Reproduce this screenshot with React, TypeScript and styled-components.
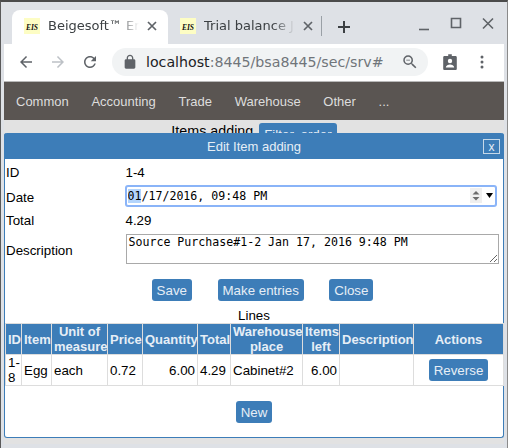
import React from "react";
import styled, { createGlobalStyle } from "styled-components";

const GlobalStyle = createGlobalStyle`
  html, body {
    margin: 0;
    padding: 0;
    background: #dee1e6;
  }
  body {
    font-family: "Liberation Sans", Arial, sans-serif;
  }
`;

const blue = "#3d7db8";

const Frame = styled.div`
  position: relative;
  box-sizing: border-box;
  width: 508px;
  height: 448px;
  overflow: hidden;
  background: #dee1e6;
  border-top: 2px solid #4b4b4b;
  border-left: 1px solid #5a5a5a;
  border-right: 1px solid #8a8a8a;
  padding: 0 3px 4px 3px;
  display: flex;
  flex-direction: column;
`;

const TabStrip = styled.div`
  height: 42px;
  box-sizing: border-box;
  padding: 8px 0 0 8px;
  display: flex;
  align-items: stretch;
  flex: none;
`;

const Tab = styled.div<{ $active?: boolean }>`
  width: ${(p) => (p.$active ? 156 : 153)}px;
  box-sizing: border-box;
  padding: 0 0 3px 12px;
  display: flex;
  align-items: center;
  border-radius: 8px 8px 0 0;
  background: ${(p) => (p.$active ? "#fff" : "transparent")};
  color: #3c4043;
  font-family: "DejaVu Sans", sans-serif;
  font-size: 13px;
`;

const Favicon = styled.span`
  width: 16px;
  height: 16px;
  flex: none;
  margin-right: 8px;
  background: #fdfdc4;
  color: #111;
  font-family: "Liberation Serif", serif;
  font-size: 7.5px;
  font-style: italic;
  font-weight: bold;
  line-height: 20px;
  text-align: center;
  overflow: hidden;
`;

const TabTitle = styled.span<{ $width: number }>`
  width: ${(p) => p.$width}px;
  flex: none;
  overflow: hidden;
  white-space: nowrap;
  -webkit-mask-image: linear-gradient(90deg, #000 75%, transparent);
  mask-image: linear-gradient(90deg, #000 75%, transparent);
`;

const TabClose = styled.svg`
  width: 16px;
  height: 16px;
  margin-left: 5px;
  flex: none;
`;

const TabDivider = styled.span`
  width: 1px;
  height: 20px;
  margin: 6px 0 0 0;
  background: #9aa0a6;
  flex: none;
`;

const NewTab = styled.svg`
  width: 16px;
  height: 16px;
  margin: 9px 0 0 14px;
  flex: none;
`;

const WindowControls = styled.div`
  margin-left: auto;
  padding: 0 8px 0 0;
  display: flex;
  gap: 16px;
  height: 16px;
  margin-top: 6px;
`;

const Toolbar = styled.div`
  height: 38px;
  flex: none;
  box-sizing: border-box;
  background: #fff;
  border-bottom: 1px solid #b9b9b9;
  display: flex;
  align-items: center;
  padding: 0 0 1px 13px;
`;

const ToolIcon = styled.svg<{ $gap?: number }>`
  width: 18px;
  height: 18px;
  flex: none;
  margin-right: ${(p) => p.$gap ?? 14}px;
`;

const Omnibox = styled.div`
  width: 316px;
  height: 28px;
  flex: none;
  box-sizing: border-box;
  margin: 0 13px 0 0;
  background: #f1f3f4;
  border-radius: 14px;
  display: flex;
  align-items: center;
  padding: 0 9px 0 10px;
  font-family: "DejaVu Sans", sans-serif;
  font-size: 14.2px;
  color: #70757a;
`;

const Host = styled.span`
  color: #202124;
`;

const Url = styled.span`
  flex: 1;
  margin-left: 8px;
  white-space: nowrap;
`;

const NavBar = styled.nav`
  height: 38px;
  flex: none;
  background: #5a5552;
  display: flex;
  align-items: center;
  padding-left: 12px;
  gap: 22.7px;
  color: #ddd;
  font-size: 13px;
`;

const Main = styled.main`
  flex: 1;
  background: #e2e2e2;
  display: flex;
  justify-content: center;
  align-items: flex-start;
  gap: 6px;
  padding-top: 3px;
  font-size: 14.3px;
  color: #000;
`;

const Button = styled.button`
  height: 22px;
  padding: 0 5px;
  border: 0;
  border-radius: 3px;
  background: ${blue};
  color: #e6eef6;
  font-family: "Liberation Sans", Arial, sans-serif;
  font-size: 13.33px;
  vertical-align: middle;
  cursor: pointer;
`;

const Dialog = styled.section`
  position: absolute;
  left: 3px;
  top: 131px;
  width: 500px;
  height: 305px;
  box-sizing: border-box;
  background: #fff;
  border: 1px solid ${blue};
  border-top: 0;
  border-radius: 3px;
  font-size: 13.33px;
  color: #000;
`;

const DialogHeader = styled.header`
  position: relative;
  height: 26px;
  margin: 0 -1px;
  background: ${blue};
  border-radius: 3px 3px 0 0;
  display: flex;
  align-items: center;
  justify-content: center;
  color: #e6eef6;
  font-size: 13px;
`;

const DialogClose = styled.span`
  position: absolute;
  right: 4px;
  top: 6px;
  width: 15px;
  height: 13px;
  border: 1px solid #c6d8e8;
  text-align: center;
  line-height: 14px;
  font-size: 12px;
`;

const Form = styled.div`
  display: grid;
  grid-template-columns: 119.5px 1fr;
  padding: 1px 4px 0 1px;
  align-items: center;
`;

const FieldLabel = styled.label<{ $shift?: number }>`
  position: relative;
  top: ${(p) => p.$shift ?? 0}px;
`;

const Value = styled.div`
  height: 24px;
  line-height: 26px;
`;

const DateField = styled.div`
  position: relative;
  height: 24px;
  display: flex;
  align-items: center;
`;

const DateInput = styled.input`
  box-sizing: border-box;
  width: calc(100% - 3px);
  height: 20px;
  margin: 0;
  padding: 0 1px;
  border: 1px solid #8ab4f8;
  border-radius: 2px;
  box-shadow: 0 0 0 1px #8ab4f8;
  font-family: "DejaVu Sans Mono", monospace;
  font-size: 11.6px;
  outline: none;

  &::-webkit-calendar-picker-indicator {
    display: none;
  }

  &::-webkit-datetime-edit-fields-wrapper,
  &::-webkit-datetime-edit,
  &::-webkit-datetime-edit-day-field,
  &::-webkit-datetime-edit-year-field,
  &::-webkit-datetime-edit-hour-field,
  &::-webkit-datetime-edit-minute-field,
  &::-webkit-datetime-edit-ampm-field {
    padding: 0;
  }

  /* the month segment stays selected, as in the picture */
  &::-webkit-datetime-edit-month-field {
    padding: 0;
    background-color: #b3d4fc;
    color: #000;
  }
`;

const DateControls = styled.svg`
  position: absolute;
  right: 4px;
  top: 3px;
  width: 28px;
  height: 18px;
`;

const DescriptionInput = styled.textarea`
  box-sizing: border-box;
  width: 100%;
  height: 30px;
  margin: 2px 0 0;
  padding: 1px 2px;
  display: block;
  border: 1px solid #a9a9a9;
  font-family: "DejaVu Sans Mono", monospace;
  font-size: 11.6px;
  line-height: 13px;
`;

const Actions = styled.div`
  display: flex;
  justify-content: center;
  gap: 25.5px;
  padding: 15px 0 0 17px;
`;

const LinesTitle = styled.div`
  margin-top: 7px;
  height: 15px;
  line-height: 15px;
  text-align: center;
`;

const LinesTable = styled.table`
  width: 498px;
  table-layout: fixed;
  border-collapse: collapse;
  margin: 0;
`;

const HeadCell = styled.th`
  height: 30px;
  padding: 0 2px;
  box-sizing: border-box;
  background: ${blue};
  border: 1px solid #ddd;
  color: #e6eef6;
  font-size: 13px;
  line-height: 15px;
  text-align: center;
  white-space: nowrap;
`;

const Cell = styled.td<{ $right?: boolean }>`
  height: 31px;
  padding: 0 2px;
  box-sizing: border-box;
  border: 1px solid #ddd;
  font-size: 13.33px;
  line-height: 15px;
  text-align: ${(p) => (p.$right ? "right" : "left")};
`;

const ActionCell = styled(Cell)`
  text-align: center;
`;

const Footer = styled.div`
  display: flex;
  justify-content: center;
  padding-top: 15px;
`;

const columns = [
  { title: "ID", width: 16 },
  { title: "Item", width: 30 },
  { title: "Unit of\nmeasure", width: 56 },
  { title: "Price", width: 35 },
  { title: "Quantity", width: 55 },
  { title: "Total", width: 33 },
  { title: "Warehouse\nplace", width: 72 },
  { title: "Items\nleft", width: 37 },
  { title: "Description", width: 74 },
  { title: "Actions", width: 90 },
];

const Column = styled.col<{ $width: number }>`
  width: ${(p) => p.$width}px;
`;

const HeadLine = styled.span`
  display: block;
`;

const CloseGlyph = () => (
  <TabClose viewBox="0 0 16 16">
    <path d="M4 4l8 8M12 4l-8 8" stroke="#5f6368" strokeWidth="1.7" fill="none" />
  </TabClose>
);

const App: React.FC = () => {
  return (
    <Frame>
      <GlobalStyle />
      <TabStrip>
        <Tab $active>
          <Favicon>EIS</Favicon>
          <TabTitle $width={91}>Beigesoft™ En</TabTitle>
          <CloseGlyph />
        </Tab>
        <Tab>
          <Favicon>EIS</Favicon>
          <TabTitle $width={91}>Trial balance J</TabTitle>
          <CloseGlyph />
        </Tab>
        <TabDivider />
        <NewTab viewBox="0 0 16 16">
          <path d="M8 2v12M2 8h12" stroke="#3c4043" strokeWidth="2" fill="none" />
        </NewTab>
        <WindowControls>
          <svg width="16" height="16" viewBox="0 0 16 16">
            <path d="M3 13.500h10" stroke="#5f6368" strokeWidth="1.6" fill="none" />
          </svg>
          <svg width="16" height="16" viewBox="0 0 16 16">
            <path d="M3.500 2.500h9v9h-9z" stroke="#5f6368" strokeWidth="1.6" fill="none" />
          </svg>
          <svg width="16" height="16" viewBox="0 0 16 16">
            <path d="M3 2.500l10 10M13 2.500l-10 10" stroke="#5f6368" strokeWidth="1.6" fill="none" />
          </svg>
        </WindowControls>
      </TabStrip>

      <Toolbar>
        <ToolIcon viewBox="0 0 24 24">
          <path fill="#5f6368" d="M20 11H7.830l5.590-5.590L12 4l-8 8 8 8 1.410-1.410L7.830 13H20v-2z" />
        </ToolIcon>
        <ToolIcon viewBox="0 0 24 24">
          <path fill="#bdc1c6" d="M4 11h12.170l-5.590-5.590L12 4l8 8-8 8-1.410-1.410L16.170 13H4v-2z" />
        </ToolIcon>
        <ToolIcon viewBox="0 0 24 24" $gap={13}>
          <path
            fill="#5f6368"
            d="M17.65 6.350C16.200 4.900 14.210 4 12 4c-4.420 0-7.990 3.580-7.990 8s3.570 8 7.990 8c3.730 0 6.840-2.550 7.730-6h-2.080c-.820 2.330-3.040 4-5.650 4-3.310 0-6-2.690-6-6s2.690-6 6-6c1.660 0 3.140.690 4.220 1.780L13 11h7V4l-2.350 2.350z"
          />
        </ToolIcon>
        <Omnibox>
          <svg width="16" height="16" viewBox="0 0 24 24">
            <path
              fill="#5f6368"
              d="M18 8h-1V6c0-2.760-2.240-5-5-5S7 3.240 7 6v2H6c-1.100 0-2 .900-2 2v10c0 1.100.900 2 2 2h12c1.100 0 2-.900 2-2V10c0-1.100-.900-2-2-2zM9 6c0-1.660 1.340-3 3-3s3 1.340 3 3v2H9V6z"
            />
          </svg>
          <Url>
            <Host>localhost</Host>:8445/bsa8445/sec/srv#
          </Url>
          <svg width="18" height="18" viewBox="0 0 24 24">
            <path
              fill="#5f6368"
              d="M15.500 14h-.790l-.280-.270A6.471 6.471 0 0 0 16 9.500 6.500 6.500 0 1 0 9.500 16c1.610 0 3.090-.590 4.230-1.570l.270.280v.790l5 4.990L20.490 19l-4.990-5zm-6 0C7.010 14 5 11.990 5 9.500S7.010 5 9.500 5 14 7.010 14 9.500 11.990 14 9.500 14zM7 9h5v1H7z"
            />
          </svg>
        </Omnibox>
        <ToolIcon viewBox="0 0 18 18" $gap={15}>
          <path
            fill="#5f6368"
            d="M3.500 3h3.700V1.200h3.600V3h3.700c.800 0 1.300.600 1.300 1.300v11.400c0 .700-.500 1.300-1.300 1.300h-11c-.800 0-1.300-.600-1.300-1.300V4.300C2.200 3.600 2.700 3 3.500 3z"
          />
          <circle cx="9" cy="8" r="2.200" fill="#fff" />
          <path fill="#fff" d="M4.800 14.500c0-1.900 2.500-3 4.200-3s4.200 1.100 4.200 3z" />
        </ToolIcon>
        <svg width="16" height="16" viewBox="0 0 16 16">
          <circle cx="8" cy="3" r="1.500" fill="#5f6368" />
          <circle cx="8" cy="8" r="1.500" fill="#5f6368" />
          <circle cx="8" cy="13" r="1.500" fill="#5f6368" />
        </svg>
      </Toolbar>

      <NavBar>
        <span>Common</span>
        <span>Accounting</span>
        <span>Trade</span>
        <span>Warehouse</span>
        <span>Other</span>
        <span>...</span>
      </NavBar>

      <Main>
        <span>Items adding</span>
        <Button>Filter, order</Button>
      </Main>

      <Dialog>
        <DialogHeader>
          Edit Item adding
          <DialogClose>x</DialogClose>
        </DialogHeader>
        <Form>
          <FieldLabel>ID</FieldLabel>
          <Value>1-4</Value>
          <FieldLabel $shift={1}>Date</FieldLabel>
          <DateField>
            <DateInput type="datetime-local" defaultValue="2016-01-17T21:48" />
            <DateControls viewBox="0 0 28 18">
              <rect x="3" y="1" width="12" height="15" fill="#efefef" />
              <path d="M9 4l3.500 3.500h-7z" fill="#6b6b6b" />
              <path d="M9 13.500l3.500-3.500h-7z" fill="#6b6b6b" />
              <path d="M19 6h7l-3.500 5z" fill="#000" />
            </DateControls>
          </DateField>
          <FieldLabel>Total</FieldLabel>
          <Value>4.29</Value>
          <FieldLabel $shift={2}>Description</FieldLabel>
          <DescriptionInput defaultValue="Source Purchase#1-2 Jan 17, 2016 9:48 PM" />
        </Form>
        <Actions>
          <Button>Save</Button>
          <Button>Make entries</Button>
          <Button>Close</Button>
        </Actions>
        <LinesTitle>Lines</LinesTitle>
        <LinesTable>
          <colgroup>
            {columns.map((column) => (
              <Column key={column.title} $width={column.width} />
            ))}
          </colgroup>
          <thead>
            <tr>
              {columns.map((column) => (
                <HeadCell key={column.title}>
                  {column.title.split("\n").map((line) => (
                    <HeadLine key={line}>{line}</HeadLine>
                  ))}
                </HeadCell>
              ))}
            </tr>
          </thead>
          <tbody>
            <tr>
              <Cell>1-8</Cell>
              <Cell>Egg</Cell>
              <Cell>each</Cell>
              <Cell>0.72</Cell>
              <Cell $right>6.00</Cell>
              <Cell>4.29</Cell>
              <Cell>Cabinet#2</Cell>
              <Cell $right>6.00</Cell>
              <Cell />
              <ActionCell>
                <Button>Reverse</Button>
              </ActionCell>
            </tr>
          </tbody>
        </LinesTable>
        <Footer>
          <Button>New</Button>
        </Footer>
      </Dialog>
    </Frame>
  );
};

export default App;
